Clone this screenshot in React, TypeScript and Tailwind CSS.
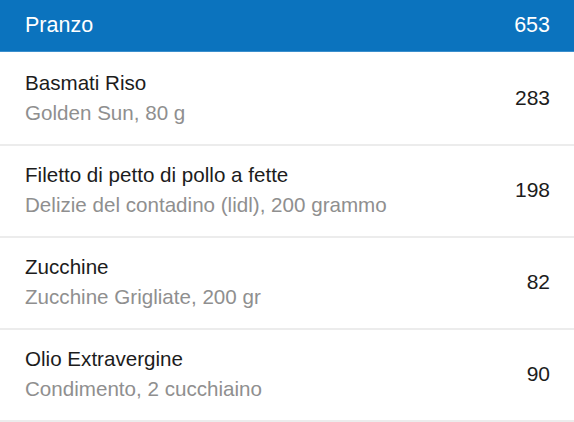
const items = [
    { name: 'Basmati Riso', detail: 'Golden Sun, 80 g', kcal: 283 },
    { name: 'Filetto di petto di pollo a fette', detail: 'Delizie del contadino (lidl), 200 grammo', kcal: 198 },
    { name: 'Zucchine', detail: 'Zucchine Grigliate, 200 gr', kcal: 82 },
    { name: 'Olio Extravergine', detail: 'Condimento, 2 cucchiaino', kcal: 90 },
];

export default function App() {
    return (
        <div className="w-[574px] h-[422px] bg-white overflow-hidden font-['Liberation_Sans',Arial,sans-serif]">
            {/* Meal header */}
            <div className="h-[52px] bg-[#0b73be] border-b border-[#3b8fcd] flex items-center justify-between pl-[25px] pr-[24px] text-white text-[21.5px]">
                <span>Pranzo</span>
                <span>653</span>
            </div>

            {/* Food rows */}
            <div className="pt-[2px]">
                {items.map((item) => (
                    <div
                        key={item.name}
                        className="h-[92px] flex items-center justify-between pl-[25px] pr-[24px] border-b-2 border-[#ececec]"
                    >
                        <div className="flex flex-col gap-[7px] mb-[3px]">
                            <span className="text-[20.6px] leading-[23px] text-[#1c1c1c]">{item.name}</span>
                            <span className="text-[20.6px] leading-[23px] text-[#8f8f8f]">{item.detail}</span>
                        </div>
                        <span className="text-[21px] text-[#1c1c1c] mb-[3px]">{item.kcal}</span>
                    </div>
                ))}
            </div>
        </div>
    );
}
